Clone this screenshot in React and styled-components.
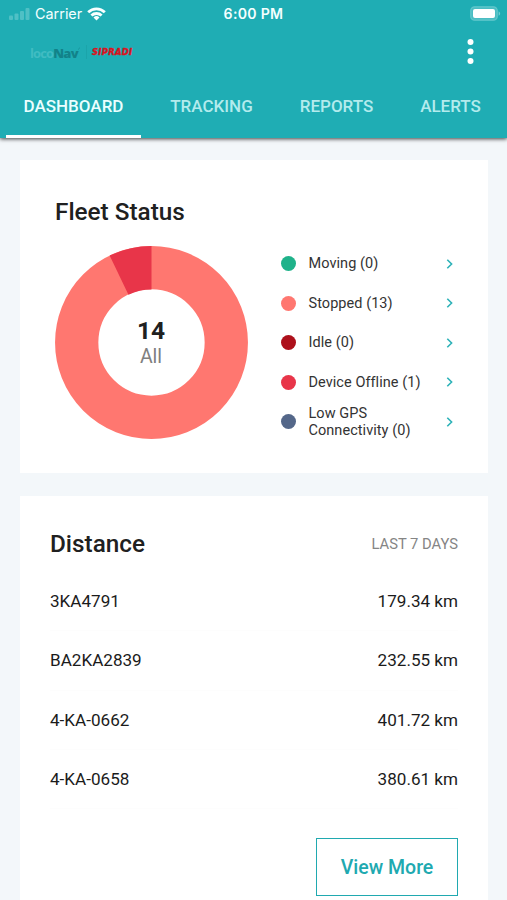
import React from "react";
import styled, { createGlobalStyle } from "styled-components";

const GlobalStyle = createGlobalStyle`
  * { box-sizing: border-box; }
  html, body { margin: 0; padding: 0; }
  body { font-family: Roboto, sans-serif; background: #f3f7fa; overflow: hidden; }
`;

const Screen = styled.div`
  width: 507px;
  height: 900px;
  overflow: hidden;
  background: #f3f7fa;
  display: flex;
  flex-direction: column;
`;

const Header = styled.header`
  flex: none;
  height: 138px;
  background: #1fadb4;
  box-shadow: 0 1px 4px rgba(0, 0, 0, 0.75);
  display: flex;
  flex-direction: column;
`;

const StatusBar = styled.div`
  height: 27px;
  padding: 0 6px 0 9px;
  display: grid;
  grid-template-columns: 1fr auto 1fr;
  align-items: center;
  color: #f4ffff;
  font-family: Inter, sans-serif;
  font-size: 14.4px;
`;

const Signal = styled.div`
  display: flex;
  align-items: center;
`;

const Carrier = styled.span`
  margin: 0 5px 0 5px;
`;

const Clock = styled.span`
  font-weight: 600;
  font-size: 14.1px;
  letter-spacing: 0.3px;
  margin-right: 3px;
`;

const BatterySlot = styled.div`
  display: flex;
  justify-content: flex-end;
`;

const Toolbar = styled.div`
  height: 49px;
  padding: 0 33px 0 30px;
  display: flex;
  align-items: center;
  justify-content: space-between;
`;

const Brands = styled.div`
  display: flex;
  align-items: center;
  line-height: 16px;
`;

const LocoNav = styled.span`
  display: flex;
  width: 50px;
  padding-top: 2px;
  font: 800 13px/16px "Open Sans", sans-serif;
  letter-spacing: -0.7px;
  color: #128289;
`;

const Loco = styled.span`
  color: #40bcc2;
  font-weight: 700;
  letter-spacing: -0.9px;
`;

const BrandRule = styled.span`
  width: 1px;
  height: 14px;
  margin: 0 5px 0 6px;
  background: #1ba4aa;
`;

const Sipradi = styled.span`
  font: italic 700 8.4px/12px "DejaVu Sans", sans-serif;
  letter-spacing: 0.3px;
  color: #d9131e;
  -webkit-text-stroke: 0.4px #d9131e;
`;

const MenuButton = styled.button`
  padding: 0;
  border: 0;
  background: none;
  display: flex;
`;

const Tabs = styled.nav`
  height: 62px;
  padding-left: 6px;
  display: flex;
`;

const Tab = styled.button`
  width: ${(p) => p.$width}px;
  flex: none;
  padding: 2px 0 0;
  border: 0;
  border-bottom: 3px solid ${(p) => (p.$active ? "#ffffff" : "transparent")};
  background: none;
  color: ${(p) => (p.$active ? "#eaffff" : "#b3ebed")};
  font: 500 17px/57px Roboto, sans-serif;
  text-align: center;
  white-space: nowrap;
`;

const Content = styled.main`
  padding: 22px 19px 0 20px;
  display: flex;
  flex-direction: column;
  gap: 23px;
`;

const Card = styled.section`
  flex: none;
  height: ${(p) => p.$height}px;
  padding: ${(p) => p.$pad};
  background: #ffffff;
`;

const Title = styled.h2`
  margin: 0;
  font-weight: 500;
  font-size: 24.3px;
  line-height: 32px;
  color: #202020;
`;

const FleetBody = styled.div`
  display: flex;
  align-items: flex-start;
  margin-top: 16px;
`;

const Chart = styled.div`
  width: 193px;
  height: 193px;
  margin-top: 2px;
  display: grid;
  place-items: center;
  & > * { grid-area: 1 / 1; }
`;

const Total = styled.div`
  display: flex;
  flex-direction: column;
  align-items: center;
  padding: 2px 1px 0 0;
`;

const TotalCount = styled.strong`
  font-weight: 700;
  font-size: 24.5px;
  line-height: 27px;
  color: #202020;
`;

const TotalLabel = styled.span`
  font-size: 19.5px;
  line-height: 26px;
  color: #808080;
`;

const Legend = styled.ul`
  list-style: none;
  margin: 0 0 0 33px;
  padding: 0;
  width: 173px;
`;

const LegendRow = styled.li`
  height: 39.5px;
  display: flex;
  align-items: center;
`;

const Dot = styled.span`
  flex: none;
  width: 15px;
  height: 15px;
  margin-right: 12.5px;
  border-radius: 50%;
  background: ${(p) => p.$color};
`;

const LegendLabel = styled.span`
  flex: 1;
  font-size: 14.5px;
  line-height: 17px;
  letter-spacing: 0.05px;
  color: #333333;
  white-space: pre-line;
`;

const DistanceHead = styled.div`
  display: flex;
  align-items: center;
  justify-content: space-between;
  margin-bottom: 12px;
`;

const Period = styled.span`
  font-size: 14.75px;
  color: #858585;
`;

const DistanceRow = styled.div`
  height: 59.3px;
  display: flex;
  align-items: center;
  justify-content: space-between;
  border-bottom: 1px solid #fdfdfd;
  font-size: 17.1px;
  color: #1b1b1b;
`;

const Actions = styled.div`
  margin-top: 29px;
  display: flex;
  justify-content: flex-end;
`;

const ViewMore = styled.button`
  width: 142px;
  height: 58px;
  padding: 2px 0 0;
  border: 1px solid #20a9b0;
  background: #ffffff;
  color: #20a9b0;
  font: 500 19.5px/54px Roboto, sans-serif;
`;

const tabs = [
  { label: "DASHBOARD", width: 135, active: true },
  { label: "TRACKING", width: 141 },
  { label: "REPORTS", width: 109 },
  { label: "ALERTS", width: 119 },
];

const statuses = [
  { label: "Moving (0)", color: "#1fb28a" },
  { label: "Stopped (13)", color: "#ff7770" },
  { label: "Idle (0)", color: "#ad101b" },
  { label: "Device Offline (1)", color: "#e83549" },
  { label: "Low GPS\nConnectivity (0)", color: "#546789" },
];

const distances = [
  ["3KA4791", "179.34 km"],
  ["BA2KA2839", "232.55 km"],
  ["4-KA-0662", "401.72 km"],
  ["4-KA-0658", "380.61 km"],
];

const SignalBars = () => (
  <svg width="21" height="14" viewBox="0 0 21 14" fill="#4fc0c5">
    <rect x="0" y="8.5" width="4" height="4.5" rx="1" />
    <rect x="5.5" y="6.5" width="4" height="6.5" rx="1" />
    <rect x="11" y="4" width="4" height="9" rx="1" />
    <rect x="16.5" y="1" width="4" height="12" rx="1" />
  </svg>
);

const Wifi = () => (
  <svg width="19" height="14" viewBox="0 0 19 14" fill="none" stroke="#f8ffff" strokeWidth="2.8">
    <path d="M1.2 5.2a11.8 11.8 0 0 1 16.6 0" />
    <path d="M4.4 8.6a7.3 7.3 0 0 1 10.2 0" />
    <path d="M9.5 13.6l-3-3.1a4.3 4.3 0 0 1 6 0z" fill="#f8ffff" stroke="none" />
  </svg>
);

const Battery = () => (
  <svg width="31" height="15" viewBox="0 0 31 15">
    <rect x="0.8" y="0.8" width="26.4" height="13.4" rx="3.8" fill="#4bbdc3" stroke="#62c7cb" strokeWidth="1.3" />
    <rect x="3" y="3" width="22" height="9" rx="2" fill="#ffffff" />
    <path d="M28.6 5.2a2.5 2.5 0 0 1 0 4.6z" fill="#72cdd1" />
  </svg>
);

const MoreDots = () => (
  <svg width="7" height="27" viewBox="0 0 7 27" fill="#ffffff">
    <circle cx="3.5" cy="3.9" r="3" />
    <circle cx="3.5" cy="13.4" r="3" />
    <circle cx="3.5" cy="22.9" r="3" />
  </svg>
);

const Donut = () => (
  <svg width="193" height="193" viewBox="-96.5 -96.5 193 193">
    <circle r="74.8" fill="none" stroke="#ff7770" strokeWidth="43.3" />
    <path d="M0-96.5V-53.1A53.1 53.1 0 0 0-23.04-47.84L-41.87-86.95A96.5 96.5 0 0 1 0-96.5Z" fill="#e83549" />
  </svg>
);

const Chevron = () => (
  <svg width="8" height="12" viewBox="0 0 8 12" fill="none" stroke="#2db2b8" strokeWidth="1.6">
    <path d="M1.3 1.7 5.6 6 1.3 10.3" />
  </svg>
);

const SwooshMark = () => (
  <svg width="4" height="8" viewBox="0 0 4 8" fill="none" stroke="#168b91" strokeWidth="1.2">
    <path d="M0.5 5.5C1.8 4.5 2.2 3 3.3 1" />
  </svg>
);

export default function App() {
  return (
    <Screen>
      <GlobalStyle />
      <Header>
        <StatusBar>
          <Signal>
            <SignalBars />
            <Carrier>Carrier</Carrier>
            <Wifi />
          </Signal>
          <Clock>6:00 PM</Clock>
          <BatterySlot>
            <Battery />
          </BatterySlot>
        </StatusBar>
        <Toolbar>
          <Brands>
            <LocoNav>
              <Loco>loco</Loco>Nav
              <SwooshMark />
            </LocoNav>
            <BrandRule />
            <Sipradi>SIPRADI</Sipradi>
          </Brands>
          <MenuButton aria-label="More options">
            <MoreDots />
          </MenuButton>
        </Toolbar>
        <Tabs>
          {tabs.map((t) => (
            <Tab key={t.label} $width={t.width} $active={t.active}>
              {t.label}
            </Tab>
          ))}
        </Tabs>
      </Header>
      <Content>
        <Card $height={313} $pad="36px 33px 0 35px">
          <Title>Fleet Status</Title>
          <FleetBody>
            <Chart>
              <Donut />
              <Total>
                <TotalCount>14</TotalCount>
                <TotalLabel>All</TotalLabel>
              </Total>
            </Chart>
            <Legend>
              {statuses.map((s) => (
                <LegendRow key={s.label}>
                  <Dot $color={s.color} />
                  <LegendLabel>{s.label}</LegendLabel>
                  <Chevron />
                </LegendRow>
              ))}
            </Legend>
          </FleetBody>
        </Card>
        <Card $height={430} $pad="32px 30px 0 30px">
          <DistanceHead>
            <Title>Distance</Title>
            <Period>LAST 7 DAYS</Period>
          </DistanceHead>
          {distances.map(([id, km]) => (
            <DistanceRow key={id}>
              <span>{id}</span>
              <span>{km}</span>
            </DistanceRow>
          ))}
          <Actions>
            <ViewMore>View More</ViewMore>
          </Actions>
        </Card>
      </Content>
    </Screen>
  );
}
